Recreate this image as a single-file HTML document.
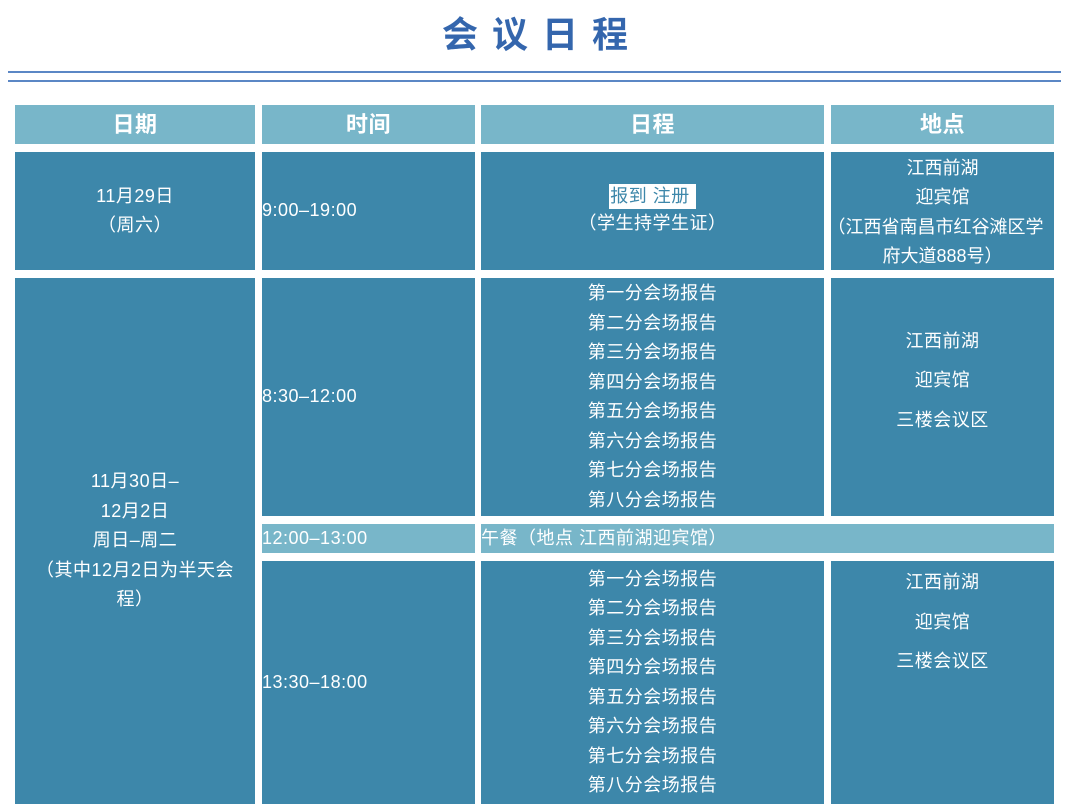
<!DOCTYPE html>
<html><head><meta charset="utf-8"><style>
*{margin:0;padding:0;box-sizing:border-box}
body{width:1080px;height:811px;background:#fff;position:relative;overflow:hidden;font-family:"Liberation Sans","Noto Sans CJK SC",sans-serif;color:#fff}
.t{position:absolute;left:0;width:1080px;top:6px;text-align:center;color:#3466ad;font-size:36px;font-weight:bold;letter-spacing:14px;padding-left:4px}
.ln{position:absolute;left:8px;width:1053px;height:2px;background:#5b87c5}
.c{position:absolute;background:#3d87aa;display:flex;flex-direction:column;justify-content:center;align-items:center;text-align:center;font-size:18px;line-height:29.5px;letter-spacing:0.5px;font-family:"Liberation Sans","Noto Sans CJK SC",sans-serif}
.h{background:#78b6c9;font-size:22px;font-weight:bold}
.l{background:#78b6c9;align-items:flex-start}
.left{align-items:flex-start}
</style></head><body>
<div class="t">会议日程</div>
<div class="ln" style="top:71px"></div>
<div class="ln" style="top:80px"></div>

<div class="c h" style="left:15px;top:105px;width:240px;height:39px">日期</div>
<div class="c h" style="left:262px;top:105px;width:213px;height:39px">时间</div>
<div class="c h" style="left:481px;top:105px;width:343px;height:39px">日程</div>
<div class="c h" style="left:831px;top:105px;width:223px;height:39px">地点</div>

<div class="c" style="left:15px;top:152px;width:240px;height:118px">11月29日<br>（周六）</div>
<div class="c left" style="left:262px;top:152px;width:213px;height:118px">9:00–19:00</div>
<div class="c" style="left:481px;top:152px;width:343px;height:118px"><span style="background:#fff;color:#3d87aa;padding:0 6px 0 1px;line-height:25px">报到 注册</span><span>（学生持学生证）</span></div>
<div class="c" style="left:831px;top:152px;width:223px;height:118px;letter-spacing:0;padding-top:3px">江西前湖<br>迎宾馆<br><span style="margin-left:-14px;white-space:nowrap">（江西省南昌市红谷滩区学</span>府大道888号）</div>

<div class="c" style="left:15px;top:278px;width:240px;height:526px">11月30日–<br>12月2日<br>周日–周二<br>（其中12月2日为半天会<br>程）</div>
<div class="c left" style="left:262px;top:278px;width:213px;height:238px">8:30–12:00</div>
<div class="c" style="left:481px;top:278px;width:343px;height:238px">第一分会场报告<br>第二分会场报告<br>第三分会场报告<br>第四分会场报告<br>第五分会场报告<br>第六分会场报告<br>第七分会场报告<br>第八分会场报告</div>
<div class="c" style="left:831px;top:278px;width:223px;height:238px;line-height:39.5px;padding-bottom:32px">江西前湖<br>迎宾馆<br>三楼会议区</div>

<div class="c l" style="left:262px;top:524px;width:213px;height:29px">12:00–13:00</div>
<div class="c l" style="left:481px;top:524px;width:573px;height:29px">午餐（地点 江西前湖迎宾馆）</div>

<div class="c left" style="left:262px;top:561px;width:213px;height:243px">13:30–18:00</div>
<div class="c" style="left:481px;top:561px;width:343px;height:243px">第一分会场报告<br>第二分会场报告<br>第三分会场报告<br>第四分会场报告<br>第五分会场报告<br>第六分会场报告<br>第七分会场报告<br>第八分会场报告</div>
<div class="c" style="left:831px;top:561px;width:223px;height:243px;justify-content:flex-start;padding-top:2px;line-height:39.5px">江西前湖<br>迎宾馆<br>三楼会议区</div>
</body></html>
